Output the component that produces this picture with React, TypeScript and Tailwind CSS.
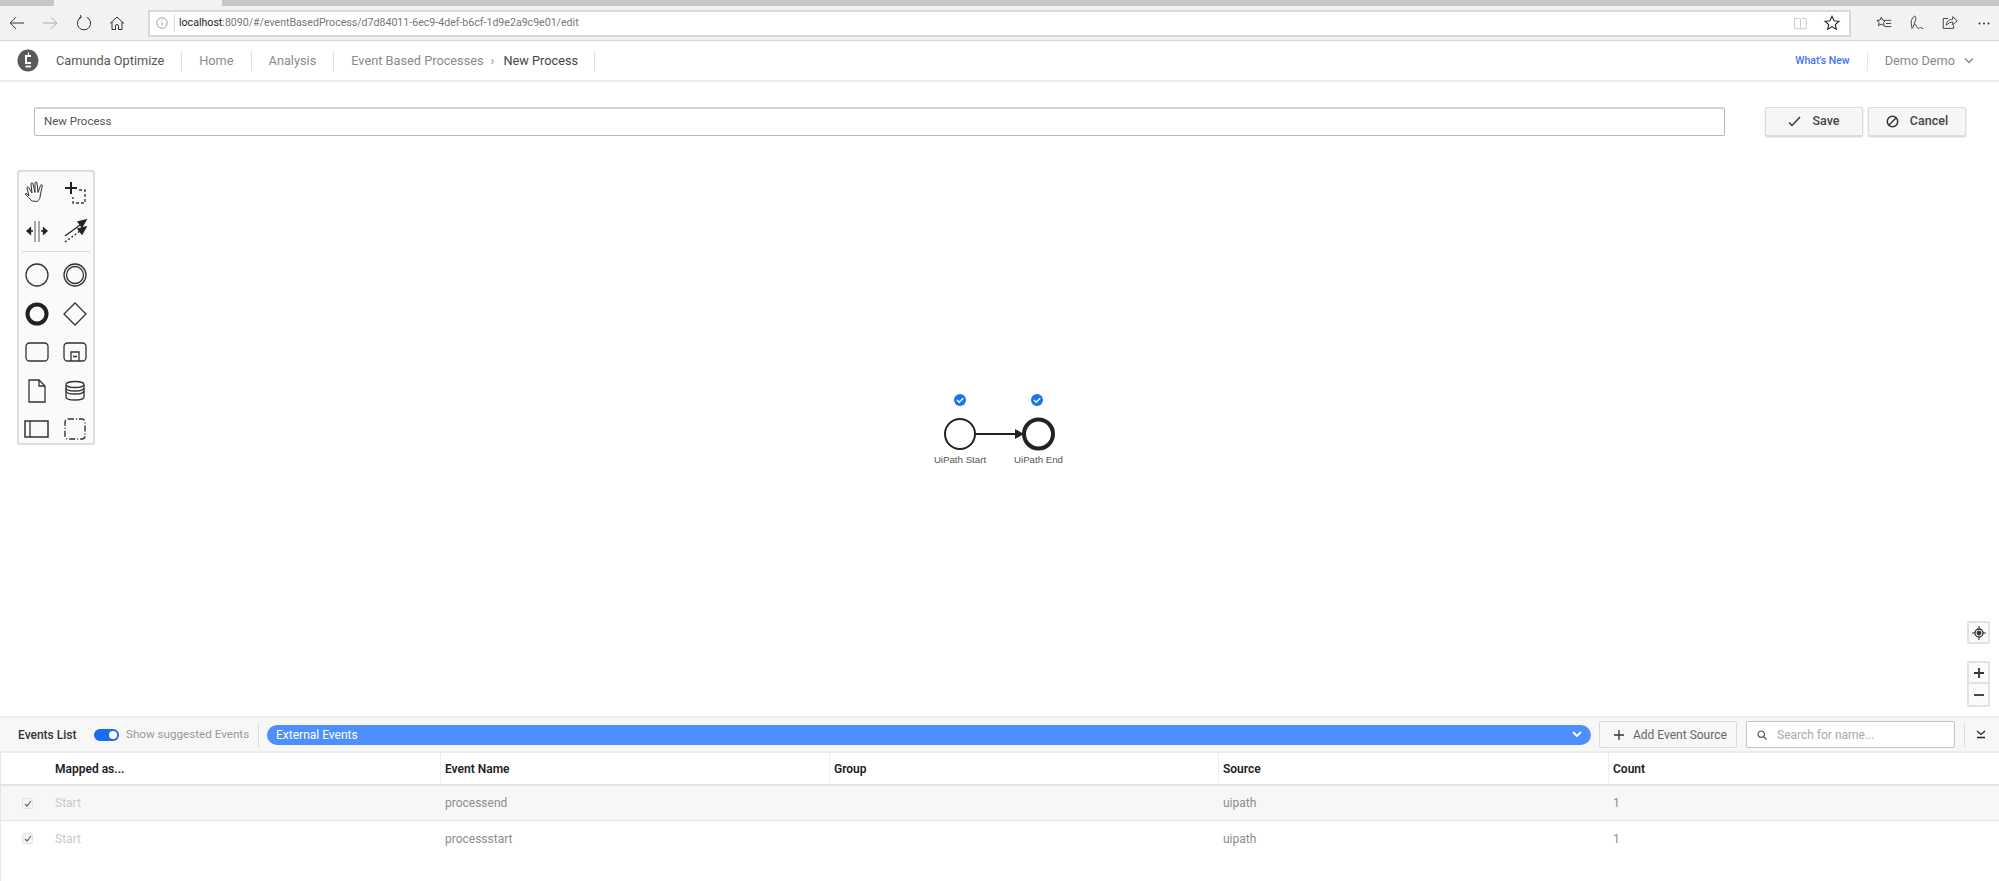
import React from "react";

const font = { fontFamily: "Roboto, sans-serif" };

const Svg = ({ size = 20, className = "", children }: { size?: number; className?: string; children: React.ReactNode }) => (
  <svg width={size} height={size} viewBox="0 0 20 20" fill="none" stroke="currentColor" strokeWidth="1" className={className}>
    {children}
  </svg>
);

function BrowserBar() {
  return (
    <div className="flex h-[35px] shrink-0 items-center border-b border-[#d4d4d4] bg-[#f2f2f2] text-[#333]">
      <div className="flex w-[148px] shrink-0 items-center">
        <Svg className="ml-[7px]"><path d="M17 10H3.500M9 4.200 3.200 10 9 15.800" /></Svg>
        <Svg className="ml-[13px] text-[#aaa]"><path d="M3 10h13.500M11 4.200l5.800 5.800-5.800 5.800" /></Svg>
        <Svg className="ml-[14px]"><path d="M7.200 4.300a6.600 6.600 0 1 0 5.600 0M7.200 4.300 6.200 2M7.200 4.300 4.800 5.200" /></Svg>
        <Svg className="ml-[13px]"><path d="M3 10.500 10 4l7 6.500M5 9v7.500h3.500v-3.500a1.500 1.500 0 0 1 3 0v3.500H15V9" /></Svg>
      </div>
      <div className="flex h-[27px] w-[1703px] shrink-0 items-center border-2 border-[#d9d9d9] bg-white">
        <Svg size={16} className="ml-[4px] text-[#888]">
          <circle cx="10" cy="10" r="6.500" />
          <path d="M10 9v4.500M10 6.500v1" />
        </Svg>
        <div className="ml-[4px] h-[18px] w-px bg-[#d9d9d9]" />
        <span className="ml-[4px] whitespace-nowrap text-[10.600px] text-[#777]">
          <span className="text-[#222]">localhost</span>:8090/#/eventBasedProcess/d7d84011-6ec9-4def-b6cf-1d9e2a9c9e01/edit
        </span>
        <div className="flex-1" />
        <Svg size={17} className="mr-[14px] text-[#c4c4c4]">
          <path d="M3 4h6l1 1 1-1h6v12h-6l-1 1-1-1H3zM10 5v11" />
        </Svg>
        <Svg size={18} className="mr-[8px] text-[#222]">
          <path d="m10 2.500 2.300 5 5.400.6-4 3.600 1.100 5.300-4.800-2.700L5.200 17l1.100-5.300-4-3.600 5.400-.6z" strokeWidth="1.200" />
        </Svg>
      </div>
      <div className="flex flex-1 items-center text-[#333]">
        <Svg size={18} className="ml-[24px]">
          <path d="m7 3.500 1.500 3.300 3.500.4-2.600 2.300.8 3.500L7 11.300 3.800 13l.8-3.500L2 7.200l3.500-.4zM12.500 7H18M12 10.500h6M10.500 14H18" />
        </Svg>
        <Svg size={18} className="ml-[15px]">
          <path d="M4.500 16 3.500 9c0-2 2-6 3.500-6.500S9 4 8.500 6.500L5.500 15zM7.500 11c2 2 2.500 5 4 5s1.500-1.500 2.500-1 1.500 1 3 1" />
        </Svg>
        <Svg size={18} className="ml-[15px]">
          <path d="M8 5H2.500v11H14v-3.500M6 12.500C6 8 9 6 13 6V3l5 4.500-5 4.500V9c-3 0-5 1-7 3.500z" />
        </Svg>
        <svg width="12" height="3" viewBox="0 0 12 3" fill="#333" className="ml-[19px]">
          <circle cx="1.500" cy="1.500" r="1" />
          <circle cx="6" cy="1.500" r="1" />
          <circle cx="10.500" cy="1.500" r="1" />
        </svg>
      </div>
    </div>
  );
}

function NavHeader() {
  const div = "ml-[17px] h-[20px] w-px bg-[#e0e0e0]";
  return (
    <header className="flex h-[41px] shrink-0 items-center border-b-2 border-[#ececec] bg-white text-[12.750px]">
      <svg width="22" height="23" viewBox="0 0 22 23" className="ml-[17px]">
        <ellipse cx="11" cy="11.500" rx="10.500" ry="11" fill="#5a5a5a" />
        <path d="M14 7h-5v7h5" stroke="#fff" strokeWidth="2" fill="none" />
        <path d="M8.500 17.500H14" stroke="#fff" strokeWidth="1.800" />
        <path d="M11.500 3.500v3" stroke="#fff" strokeWidth="1.200" />
      </svg>
      <span className="ml-[17px] whitespace-nowrap text-[#555]">Camunda Optimize</span>
      <div className={div} />
      <span className="ml-[17px] text-[#8a8a8a]">Home</span>
      <div className={div} />
      <span className="ml-[17px] text-[#8a8a8a]">Analysis</span>
      <div className={div} />
      <span className="ml-[17px] whitespace-nowrap text-[#8a8a8a]">Event Based Processes</span>
      <span className="ml-[7px] text-[#8a8a8a]">›</span>
      <span className="ml-[9px] whitespace-nowrap text-[#444]">New Process</span>
      <div className="ml-[16px] h-[20px] w-px bg-[#e0e0e0]" />
      <div className="flex-1" />
      <span className="whitespace-nowrap text-[10.500px] font-medium text-[#3f73f5]">What's New</span>
      <div className="ml-[17px] h-[20px] w-px bg-[#e8e8e8]" />
      <span className="ml-[17px] whitespace-nowrap text-[#8a8a8a]">Demo Demo</span>
      <svg width="12" height="8" viewBox="0 0 12 8" className="ml-[8px] mr-[24px]" fill="none" stroke="#888" strokeWidth="1.400">
        <path d="m2 1.500 4 4 4-4" />
      </svg>
    </header>
  );
}

function TitleRow() {
  const btn =
    "flex h-[29px] w-[98px] items-center justify-center gap-[11px] rounded-[2px] border border-[#dcdcdc] bg-[#f6f6f6] text-[12.500px] font-medium text-[#444] shadow-[0_1px_2px_rgba(0,0,0,0.2)]";
  return (
    <div className="flex shrink-0 items-center bg-white pl-[34px] pt-[25px]">
      <div className="flex h-[29px] w-[1691px] items-center rounded-[2px] border border-[#b9b9b9] border-t-2 border-t-[#d4d4d4] bg-white pl-[9px] text-[11.500px] text-[#555]">
        New Process
      </div>
      <button className={`${btn} ml-[40px]`}>
        <svg width="13" height="11" viewBox="0 0 13 11" fill="none" stroke="#333" strokeWidth="1.400">
          <path d="m1 6.500 3 3L12 1" />
        </svg>
        Save
      </button>
      <button className={`${btn} ml-[5px]`}>
        <svg width="13" height="13" viewBox="0 0 13 13" fill="none" stroke="#333" strokeWidth="1.500">
          <circle cx="6.500" cy="6.500" r="5.200" />
          <path d="m3 10 7-7" />
        </svg>
        Cancel
      </button>
    </div>
  );
}

const Ico = ({ children }: { children: React.ReactNode }) => (
  <svg width="26" height="26" viewBox="0 0 26 26" fill="none" stroke="#333" strokeWidth="1.300" className="block">
    {children}
  </svg>
);

function Palette() {
  const top = [
    <path key="h" d="M8 21c-2-2-5-5-7-7 1-1 3 0 4 2L3 8c0-1.500 1.500-1.500 2 0l3 5-1-9c0-1.500 2-1.500 2 0l2 8.500V3c0-1.500 2-1.500 2 0l1 9.500 2.500-7c.5-1.500 2-1 1.800.5l-2 9c0 3-1 4.500-3 6.500z" strokeWidth="1" />,
    <g key="l"><path d="M9 2v12M3 8h12" strokeWidth="2" stroke="#222" /><path d="M17 10h6v13H11v-6" strokeDasharray="3 2" strokeWidth="1.300" /></g>,
    <g key="s"><path d="M11 3v21M15 3v21" stroke="#556" strokeWidth="1" /><path d="M9 13H3M3 13l3.500-3v6zM17 13h6M23 13l-3.500-3v6z" fill="#222" stroke="#222" /></g>,
    <g key="c"><path d="M3 18 18 7" stroke="#222" /><path d="m24 2-8 2 4 5z" fill="#222" stroke="#222" /><path d="M3 24 18 13" strokeDasharray="2 2" stroke="#222" /><path d="m24 9-8 2 4 5z" fill="#222" stroke="#222" /></g>,
  ];
  const shapes = [
    <circle key="a" cx="13" cy="13" r="11" />,
    <g key="b"><circle cx="13" cy="13" r="11" /><circle cx="13" cy="13" r="8.500" /></g>,
    <circle key="c" cx="13" cy="13" r="9.500" strokeWidth="4" stroke="#222" />,
    <path key="d" d="m13 2 11 11-11 11L2 13z" />,
    <rect key="e" x="2" y="4" width="22" height="18" rx="3.500" />,
    <g key="f"><rect x="2" y="4" width="22" height="18" rx="3.500" /><path d="M9 22v-9h8v9M11 17.500h4" /></g>,
    <path key="g" d="M5 2h10l6 6v16H5zM15 2v6h6" />,
    <g key="h"><path d="M4 7v12c0 4 18 4 18 0V7" /><ellipse cx="13" cy="6.500" rx="9" ry="3" /><path d="M4 10c0 4 18 4 18 0M4 13c0 4 18 4 18 0" /></g>,
    <g key="i"><rect x="1" y="5" width="23" height="16" strokeWidth="1.500" /><path d="M6 5v16" /></g>,
    <rect key="j" x="3" y="3" width="20" height="20" rx="3" strokeDasharray="6 2 1 2" strokeWidth="1.400" />,
  ];
  return (
    <div className="absolute left-[17px] top-[34px] w-[78px] rounded-[2px] border-2 border-[#dedede] bg-[#fafafa] pb-[1px] pt-[8px]">
      <div className="ml-[-1px] grid grid-cols-[38px_38px] justify-items-center gap-y-[12px]">
        {top.map((icon, i) => <Ico key={i}>{icon}</Ico>)}
      </div>
      <div className="mx-[3px] mb-[10px] mt-[7px] h-px bg-[#dcdcdc]" />
      <div className="ml-[-1px] grid grid-cols-[38px_38px] justify-items-center gap-y-[12.500px]">
        {shapes.map((icon, i) => <Ico key={i}>{icon}</Ico>)}
      </div>
    </div>
  );
}

function DiagramFull() {
  return (
    <svg width="180" height="90" viewBox="0 0 180 90" className="absolute left-[910px] top-[249px]" style={{ fontFamily: "'Liberation Sans', sans-serif" }}>
      <circle cx="50" cy="15" r="6" fill="#1a73f0" />
      <path d="m47 15 2.200 2.200 4-4" stroke="#fff" strokeWidth="1.500" fill="none" />
      <circle cx="127" cy="15" r="6" fill="#1a73f0" />
      <path d="m124 15 2.200 2.200 4-4" stroke="#fff" strokeWidth="1.500" fill="none" />
      <circle cx="50" cy="49" r="15" fill="#fff" stroke="#222" strokeWidth="2" />
      <circle cx="128.500" cy="49" r="14.500" fill="#fff" stroke="#222" strokeWidth="4" />
      <path d="M65 49h45" stroke="#222" strokeWidth="2" />
      <path d="m114 49-9-5v10z" fill="#222" />
      <text x="50" y="78" textAnchor="middle" fontSize="9.700" fill="#555">UiPath Start</text>
      <text x="128.500" y="78" textAnchor="middle" fontSize="9.700" fill="#555">UiPath End</text>
    </svg>
  );
}

function MapControls() {
  const box = "flex w-[23px] items-center justify-center rounded-[2px] border-2 border-[#e2e2e2] bg-[#fafafa]";
  return (
    <div className="absolute right-[9px] top-[485px] flex flex-col gap-[17px]">
      <div className={`${box} h-[23px]`}>
        <svg width="14" height="14" viewBox="0 0 14 14" fill="none" stroke="#333">
          <circle cx="7" cy="7" r="4" strokeWidth="1.300" />
          <circle cx="7" cy="7" r="2" fill="#333" />
          <path d="M7 0v3M7 11v3M0 7h3M11 7h3" />
        </svg>
      </div>
      <div className={`${box} flex-col`}>
        <div className="flex h-[21px] w-full items-center justify-center border-b-2 border-[#e2e2e2]">
          <svg width="10" height="10" viewBox="0 0 10 10" stroke="#333" strokeWidth="1.800"><path d="M5 0v10M0 5h10" /></svg>
        </div>
        <div className="flex h-[21px] w-full items-center justify-center">
          <svg width="10" height="10" viewBox="0 0 10 10" stroke="#333" strokeWidth="1.800"><path d="M0 5h10" /></svg>
        </div>
      </div>
    </div>
  );
}

function EventsBar() {
  return (
    <div className="flex h-[37px] shrink-0 items-center whitespace-nowrap border-y-2 border-[#ececec] bg-[#f7f7f7] text-[12px]">
      <span className="ml-[18px] w-[76px] shrink-0 font-medium text-[#333]">Events List</span>
      <div className="relative h-[12px] w-[25px] shrink-0 rounded-full bg-[#1a6cf0]">
        <div className="absolute right-[2px] top-[2px] h-[8px] w-[8px] rounded-full bg-white" />
      </div>
      <span className="ml-[7px] w-[124px] shrink-0 text-[11.650px] text-[#999]">Show suggested Events</span>
      <div className="ml-[8px] h-[24px] w-px shrink-0 bg-[#dcdcdc]" />
      <div className="ml-[8px] flex h-[20px] w-[1324px] shrink-0 items-center rounded-full bg-[#4d8fff] pl-[9px] pr-[9px] text-white">
        External Events
        <div className="flex-1" />
        <svg width="10" height="7" viewBox="0 0 10 7" fill="none" stroke="#fff" strokeWidth="1.800"><path d="m1 1 4 4 4-4" /></svg>
      </div>
      <button className="ml-[8px] flex h-[27px] w-[138px] shrink-0 items-center rounded-[2px] border border-[#dcdcdc] bg-[#f7f7f7] text-[#666]">
        <svg width="10" height="10" viewBox="0 0 10 10" stroke="#333" strokeWidth="1.300" className="ml-[14px] mr-[9px]"><path d="M5 0v10M0 5h10" /></svg>
        Add Event Source
      </button>
      <div className="ml-[9px] flex h-[27px] w-[209px] shrink-0 items-center rounded-[2px] border border-[#c4c4c4] bg-white text-[#aaa]">
        <svg width="10" height="10" viewBox="0 0 10 10" fill="none" stroke="#555" strokeWidth="1.200" className="ml-[10px] mr-[10px]"><circle cx="4.200" cy="4.200" r="3.200" /><path d="m6.500 6.500 3 3" /></svg>
        Search for name...
      </div>
      <div className="ml-[9px] h-[24px] w-px shrink-0 bg-[#dcdcdc]" />
      <svg width="10" height="9" viewBox="0 0 10 9" fill="none" stroke="#222" strokeWidth="1.300" className="ml-[11px] shrink-0"><path d="m1 1 4 3.500L9 1M1 7.500h8" /></svg>
    </div>
  );
}

const cols = ["w-[389px]", "w-[389px]", "w-[390px]"];

function EventsTable() {
  const rows = [
    { name: "processend", bg: "bg-[#f7f7f7]" },
    { name: "processstart", bg: "bg-white" },
  ];
  return (
    <div className="flex-1 border-l border-[#e6e6e6] bg-white text-[12px]">
      <div className="flex h-[33px] items-center border-b-2 border-[#e4e4e4] font-semibold text-[#222]">
        <div className="flex h-full w-[440px] items-center border-r border-[#efefef] pl-[54px]">Mapped as...</div>
        {["Event Name", "Group", "Source"].map((h, i) => (
          <div key={h} className={`flex h-full ${cols[i]} items-center border-r border-[#efefef] pl-[4px]`}>{h}</div>
        ))}
        <div className="flex h-full flex-1 items-center pl-[4px]">Count</div>
      </div>
      {rows.map((r) => (
        <div key={r.name} className={`flex h-[35px] items-center border-b border-[#e4e4e4] last:border-b-0 ${r.bg} text-[#8c8c8c]`}>
          <div className="flex w-[440px] items-center">
            <div className="ml-[21px] flex h-[11px] w-[11px] items-center justify-center rounded-[2px] border border-[#e4e4e4] bg-[#f5f5f5]">
              <svg width="8" height="7" viewBox="0 0 8 7" fill="none" stroke="#666" strokeWidth="1.200"><path d="m1 4 2 2 4-5" /></svg>
            </div>
            <span className="ml-[22px] text-[#c9c9c9]">Start</span>
          </div>
          <div className={`${cols[0]} pl-[4px]`}>{r.name}</div>
          <div className={`${cols[1]} pl-[4px]`} />
          <div className={`${cols[2]} pl-[4px]`}>uipath</div>
          <div className="flex-1 pl-[4px]">1</div>
        </div>
      ))}
    </div>
  );
}

export default function App() {
  return (
    <div className="flex h-[881px] w-[1999px] flex-col overflow-hidden bg-white" style={font}>
      <div className="flex h-[6px] shrink-0 bg-[#c6c6c6]">
        <div className="ml-[54px] h-full w-[168px] bg-[#f2f2f2]" />
      </div>
      <BrowserBar />
      <NavHeader />
      <TitleRow />
      <div className="relative flex-1">
        <Palette />
        <DiagramFull />
        <MapControls />
      </div>
      <EventsBar />
      <div className="flex h-[128px] shrink-0 flex-col">
        <EventsTable />
      </div>
    </div>
  );
}
